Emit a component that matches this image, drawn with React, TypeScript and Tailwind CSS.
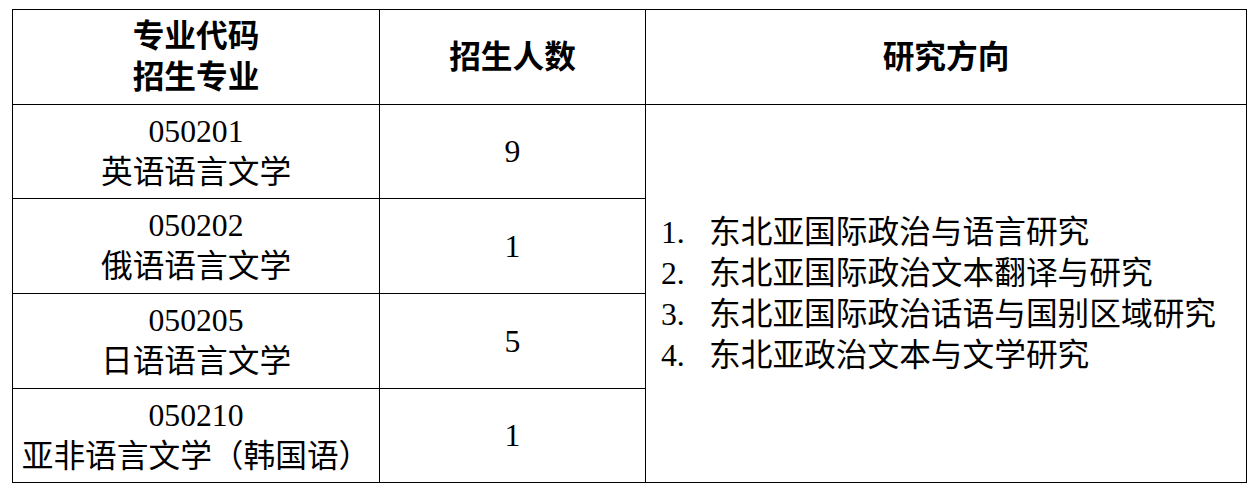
const rows = [
  { code: "050201", name: "英语语言文学", count: "9", h: "h-[94px]" },
  { code: "050202", name: "俄语语言文学", count: "1", h: "h-[95px]" },
  { code: "050205", name: "日语语言文学", count: "5", h: "h-[95px]" },
  { code: "050210", name: "亚非语言文学（韩国语）", count: "1", h: "h-[94px]" },
];

const directions = [
  "东北亚国际政治与语言研究",
  "东北亚国际政治文本翻译与研究",
  "东北亚国际政治话语与国别区域研究",
  "东北亚政治文本与文学研究",
];

export default function App() {
  return (
    <div className="w-[1254px] h-[494px] bg-white pt-[9px] pl-[12px] text-black font-['Liberation_Serif','Noto_Sans_CJK_SC',serif] text-[31.7px] leading-[41px]">
      <table className="border-collapse table-fixed w-[1234px]">
        <colgroup>
          <col className="w-[367px]" />
          <col className="w-[266px]" />
          <col className="w-[601px]" />
        </colgroup>
        <thead>
          <tr className="h-[95px]">
            <th className="border border-black text-center font-bold">
              <div>专业代码</div>
              <div>招生专业</div>
            </th>
            <th className="border border-black text-center font-bold">招生人数</th>
            <th className="border border-black text-center font-bold">研究方向</th>
          </tr>
        </thead>
        <tbody>
          {rows.map((r, i) => (
            <tr key={r.code} className={r.h}>
              <td className="border border-black text-center align-middle">
                <div>{r.code}</div>
                <div className="whitespace-nowrap">{r.name}</div>
              </td>
              <td className="border border-black text-center align-middle">{r.count}</td>
              {i === 0 && (
                <td rowSpan={4} className="border border-black align-middle pl-[15px]">
                  {directions.map((d, j) => (
                    <div key={d} className="flex whitespace-nowrap">
                      <span className="w-[48px] shrink-0">{j + 1}.</span>
                      <span>{d}</span>
                    </div>
                  ))}
                </td>
              )}
            </tr>
          ))}
        </tbody>
      </table>
    </div>
  );
}
